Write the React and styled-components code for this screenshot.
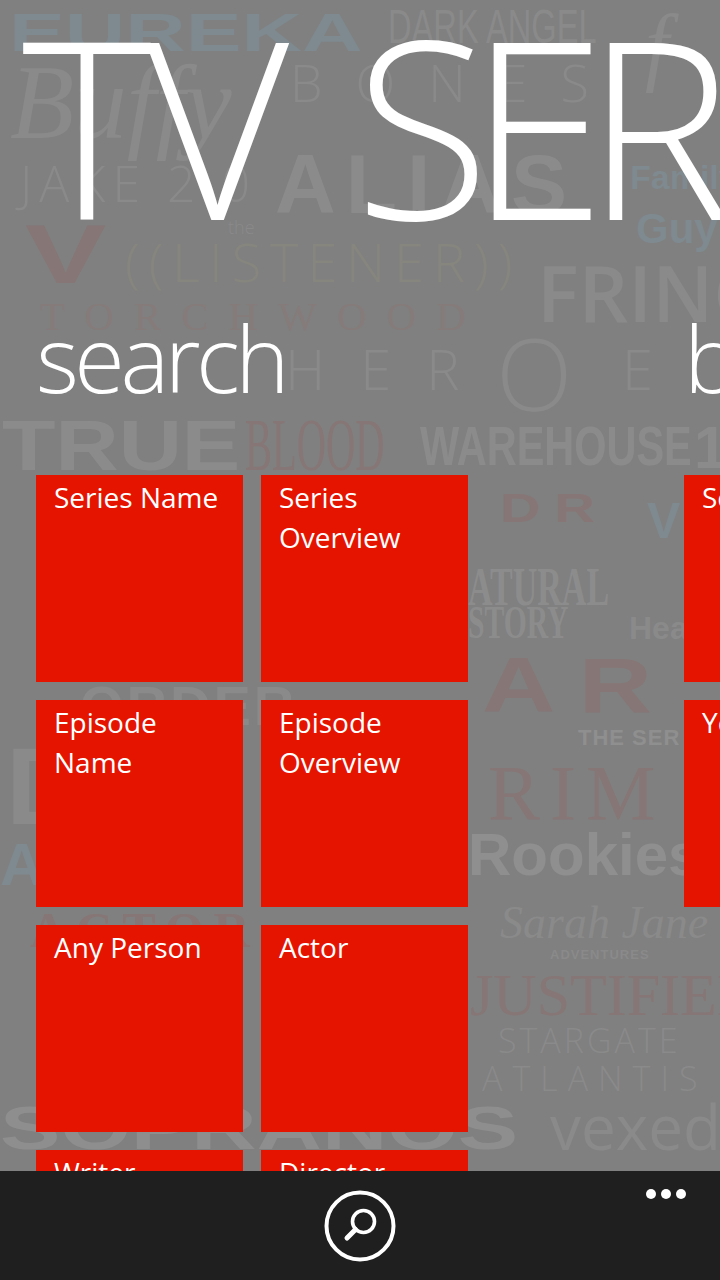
import styled, { createGlobalStyle } from "styled-components";

const GlobalStyle = createGlobalStyle`
  html, body {
    margin: 0;
    padding: 0;
    background: #1f1f1f;
  }
`;

const searchTiles = [
  "Series Name",
  "Series Overview",
  "Episode Name",
  "Episode Overview",
  "Any Person",
  "Actor",
  "Writer",
  "Director",
];

const browseTiles = ["Series", "Year"];

const SANS = "Liberation Sans";
const SERIF = "Liberation Serif";
const OPEN = "Open Sans";
const GREY = "#989898";
const BLUE = "#7c98a4";
const RED = "#8f6a66";

// faint show logos printed on the wallpaper
const logos = [
  { text: "EUREKA", x: 9, y: 5, size: 54, weight: 700, color: BLUE, font: SANS, stretch: 1.55 },
  { text: "DARK ANGEL", x: 388, y: 3, size: 48, weight: 400, color: GREY, font: SANS, stretch: 0.68 },
  { text: "f", x: 645, y: 2, size: 86, weight: 400, color: GREY, font: SERIF, italic: true },
  { text: "Buffy", x: 10, y: 50, size: 105, weight: 400, color: GREY, font: SERIF, italic: true },
  { text: "BONES", x: 290, y: 56, size: 52, weight: 300, color: GREY, spacing: 33, font: OPEN },
  { text: "JAKE 2.0", x: 20, y: 158, size: 50, weight: 300, color: GREY, spacing: 7, font: OPEN },
  { text: "ALIAS", x: 275, y: 142, size: 84, weight: 700, color: "#9c9c9c", spacing: 10, font: SANS },
  { text: "Family", x: 630, y: 160, size: 34, weight: 700, color: BLUE, font: SANS },
  { text: "Guy", x: 636, y: 208, size: 42, weight: 700, color: BLUE, font: SANS },
  { text: "V", x: 25, y: 212, size: 84, weight: 700, color: RED, font: SANS, stretch: 1.45 },
  { text: "the", x: 228, y: 218, size: 18, weight: 300, color: GREY, font: OPEN },
  { text: "((LISTENER))", x: 125, y: 234, size: 54, weight: 300, color: "#8f8e7c", spacing: 9, font: OPEN },
  { text: "FRINGE", x: 537, y: 253, size: 78, weight: 600, color: GREY, font: OPEN },
  { text: "TORCHWOOD", x: 40, y: 296, size: 41, weight: 400, color: "#8c7672", spacing: 20, font: SERIF },
  { text: "HER", x: 285, y: 340, size: 56, weight: 300, color: GREY, spacing: 35, font: OPEN },
  { text: "O", x: 496, y: 322, size: 100, weight: 300, color: GREY, font: OPEN },
  { text: "E", x: 622, y: 340, size: 56, weight: 300, color: GREY, font: OPEN },
  { text: "TRUE", x: 2, y: 411, size: 70, weight: 700, color: "#9c9c9c", font: SANS, stretch: 1.25 },
  { text: "BLOOD", x: 245, y: 407, size: 75, weight: 400, color: RED, font: SERIF, stretch: 0.54 },
  { text: "WAREHOUSE", x: 420, y: 418, size: 56, weight: 700, color: "#9c9c9c", font: SANS, stretch: 0.74 },
  { text: "1", x: 694, y: 418, size: 60, weight: 700, color: "#9c9c9c", font: SANS },
  { text: "DR", x: 500, y: 488, size: 40, weight: 700, color: RED, spacing: 10, font: SANS, stretch: 1.4 },
  { text: "V", x: 647, y: 496, size: 50, weight: 700, color: BLUE, font: SANS },
  { text: "ATURAL", x: 468, y: 560, size: 54, weight: 700, color: "#9e9e9e", font: SERIF, stretch: 0.63 },
  { text: "STORY", x: 468, y: 599, size: 47, weight: 700, color: "#9e9e9e", font: SERIF, stretch: 0.63 },
  { text: "Hea", x: 629, y: 612, size: 32, weight: 700, color: GREY, font: SANS },
  { text: "AR", x: 482, y: 646, size: 78, weight: 700, color: RED, spacing: 18, font: SANS, stretch: 1.3 },
  { text: "THE SER", x: 578, y: 727, size: 22, weight: 700, color: "#a4a4a4", spacing: 1, font: SANS },
  { text: "RIM", x: 488, y: 754, size: 78, weight: 400, color: RED, spacing: 10, font: SERIF },
  { text: "Rookies", x: 468, y: 825, size: 60, weight: 700, color: "#a4a4a4", font: SANS },
  { text: "Sarah Jane", x: 500, y: 900, size: 46, weight: 400, color: GREY, font: SERIF, italic: true },
  { text: "ADVENTURES", x: 550, y: 948, size: 13, weight: 700, color: GREY, spacing: 1, font: SANS },
  { text: "JUSTIFIED", x: 470, y: 965, size: 60, weight: 400, color: RED, font: SERIF },
  { text: "STARGATE", x: 498, y: 1023, size: 34, weight: 300, color: GREY, spacing: 3, font: OPEN },
  { text: "ATLANTIS", x: 482, y: 1061, size: 34, weight: 300, color: GREY, spacing: 10, font: OPEN },
  { text: "ORDER", x: 80, y: 678, size: 56, weight: 700, color: GREY, spacing: 3, font: SANS },
  { text: "D", x: 6, y: 731, size: 110, weight: 700, color: GREY, font: SANS },
  { text: "A", x: 0, y: 835, size: 60, weight: 700, color: BLUE, font: SANS },
  { text: "ACTOR", x: 30, y: 905, size: 50, weight: 700, color: RED, spacing: 10, font: SERIF },
  { text: "SOPRANOS", x: 0, y: 1097, size: 62, weight: 700, color: "#a2a2a2", font: SANS, stretch: 1.46 },
  { text: "vexed", x: 550, y: 1095, size: 62, weight: 400, color: GREY, font: OPEN },
];

export default function App() {
  return (
    <Screen>
      <GlobalStyle />
      <Content>
        <Wallpaper>
          {logos.map((logo) => (
            <Logo
              key={logo.text + logo.x}
              $x={logo.x}
              $y={logo.y}
              $size={logo.size}
              $weight={logo.weight}
              $color={logo.color}
              $spacing={logo.spacing}
              $font={logo.font}
              $italic={logo.italic}
              $stretch={logo.stretch}
            >
              {logo.text}
            </Logo>
          ))}
        </Wallpaper>

        <Title>
          TV <TitleTail>SERIES</TitleTail>
        </Title>

        <Sections>
          <Section>
            <Heading>search</Heading>
            <TileGrid $columns={2}>
              {searchTiles.map((label) => (
                <Tile key={label}>{label}</Tile>
              ))}
            </TileGrid>
          </Section>
          <Section>
            <Heading>browse</Heading>
            <TileGrid $columns={1}>
              {browseTiles.map((label) => (
                <Tile key={label}>{label}</Tile>
              ))}
            </TileGrid>
          </Section>
        </Sections>
      </Content>

      <AppBar>
        <RoundButton aria-label="search">
          <svg width="72" height="72" viewBox="0 0 72 72" fill="none" stroke="#fff">
            <circle cx="36" cy="36" r="33.5" strokeWidth="4" />
            <circle cx="39.5" cy="31.5" r="11" strokeWidth="3.6" />
            <path d="M31.5 39.5 L23 48" strokeWidth="5" strokeLinecap="round" />
          </svg>
        </RoundButton>
        <MoreDots aria-label="more">
          <Dot />
          <Dot />
          <Dot />
        </MoreDots>
      </AppBar>
    </Screen>
  );
}

const Screen = styled.div`
  width: 720px;
  height: 1280px;
  display: flex;
  flex-direction: column;
  overflow: hidden;
  font-family: "Open Sans", "Liberation Sans", sans-serif;
  color: #fff;
`;

const Content = styled.main`
  position: relative;
  flex: 1;
  min-height: 0;
  overflow: hidden;
  background: #808080;
`;

const Wallpaper = styled.div`
  position: absolute;
  inset: 0;
  overflow: hidden;
  opacity: 0.42;
`;

const Logo = styled.span`
  position: absolute;
  left: ${(p) => p.$x}px;
  top: ${(p) => p.$y}px;
  font-family: "${(p) => p.$font}", sans-serif;
  font-size: ${(p) => p.$size}px;
  font-weight: ${(p) => p.$weight};
  font-style: ${(p) => (p.$italic ? "italic" : "normal")};
  letter-spacing: ${(p) => p.$spacing || 0}px;
  line-height: 1;
  color: ${(p) => p.$color};
  white-space: nowrap;
  transform: scaleX(${(p) => p.$stretch || 1});
  transform-origin: left top;
`;

const Title = styled.h1`
  position: relative;
  margin: 0;
  height: 290px;
  padding-left: 22px;
  font-size: 248px;
  font-weight: 300;
  line-height: 248px;
  letter-spacing: -6px;
  word-spacing: 13px;
  white-space: nowrap;
`;

const TitleTail = styled.span`
  letter-spacing: -21px;
`;

const Sections = styled.div`
  position: relative;
  display: flex;
`;

const Section = styled.section`
  flex: 0 0 684px;
  padding-left: 36px;
  box-sizing: border-box;
  &:last-child {
    padding-left: 0;
  }
`;

const Heading = styled.h2`
  margin: 0;
  height: 185px;
  font-size: 92px;
  font-weight: 300;
  line-height: 136px;
  letter-spacing: -4.5px;
`;

const TileGrid = styled.div`
  display: grid;
  grid-template-columns: repeat(${(p) => p.$columns}, 207px);
  grid-auto-rows: 207px;
  gap: 18px;
`;

const Tile = styled.div`
  box-sizing: border-box;
  padding: 2px 18px 0;
  background: #e51400;
  font-size: 28px;
  line-height: 40px;
`;

const AppBar = styled.footer`
  position: relative;
  flex: 0 0 109px;
  display: flex;
  justify-content: center;
  padding-top: 19px;
  box-sizing: border-box;
  background: #1f1f1f;
`;

const RoundButton = styled.div`
  width: 72px;
  height: 72px;
`;

const MoreDots = styled.div`
  position: absolute;
  top: 18px;
  right: 34px;
  display: flex;
  gap: 5px;
`;

const Dot = styled.span`
  width: 10px;
  height: 10px;
  border-radius: 50%;
  background: #fff;
`;
